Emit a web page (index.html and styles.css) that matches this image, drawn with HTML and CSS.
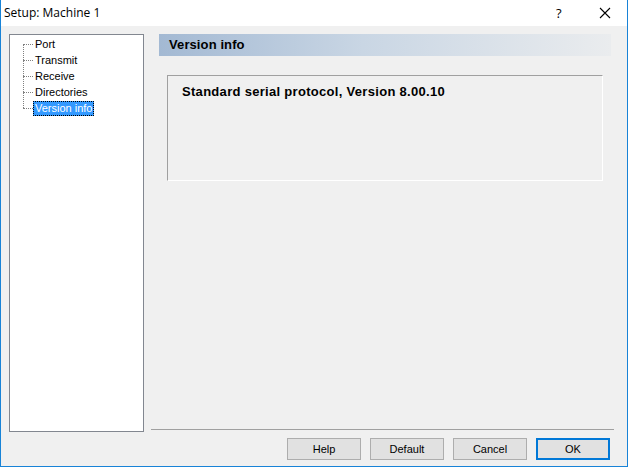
FILE: index.html
```html
<!DOCTYPE html>
<html>
<head>
<meta charset="utf-8">
<link rel="stylesheet" href="styles.css">
</head>
<body>
<div class="window">
  <div class="titlebar">
    <span class="title">Setup: Machine 1</span>
    <span class="help-q">?</span>
    <span class="close">
      <svg width="12" height="12" viewBox="0 0 12 12"><path d="M1 1 L11 11 M11 1 L1 11" stroke="#000" stroke-width="1.1" fill="none"/></svg>
    </span>
  </div>
  <div class="client">
    <div class="tree">
      <div class="tree-line"></div>
      <div class="item"><span class="dots"></span><span class="label">Port</span></div>
      <div class="item"><span class="dots"></span><span class="label">Transmit</span></div>
      <div class="item"><span class="dots"></span><span class="label">Receive</span></div>
      <div class="item"><span class="dots"></span><span class="label">Directories</span></div>
      <div class="item"><span class="dots"></span><span class="label selected">Version info</span></div>
    </div>
    <div class="right">
      <div class="content">
        <div class="header">Version info</div>
        <div class="group">Standard serial protocol, Version 8.00.10</div>
      </div>
      <div class="separator"></div>
      <div class="buttons">
        <button class="btn">Help</button>
        <button class="btn">Default</button>
        <button class="btn">Cancel</button>
        <button class="btn default">OK</button>
      </div>
    </div>
  </div>
</div>
</body>
</html>
```
FILE: styles.css
```css
* { box-sizing: border-box; }
html, body { margin: 0; padding: 0; }
body { width: 628px; height: 467px; overflow: hidden; background: #f0f0f0; }
.window {
  width: 628px; height: 467px;
  border-left: 1px solid #1883d7;
  border-right: 1px solid #1883d7;
  border-bottom: 1px solid #1883d7;
  background: #f0f0f0;
  display: flex; flex-direction: column;
  font-family: "Liberation Sans", Arial, sans-serif;
}
.titlebar {
  height: 26px; background: #fff;
  display: flex; align-items: center;
  position: relative;
  flex: none;
}
.title {
  font-family: "Open Sans", "Noto Sans", sans-serif;
  font-size: 12px; color: #000;
  margin-left: 3px; margin-top: -1px;
}
.help-q {
  position: absolute; left: 555px; top: 4px;
  font-family: "Open Sans", sans-serif; font-size: 13px;
}
.close { position: absolute; left: 598px; top: 7px; display: flex; }
.client {
  flex: 1; display: flex;
  padding: 8px 13px 6px 8px;
  gap: 7px;
}
.tree {
  width: 135px; height: 398px;
  border: 1px solid #828790;
  background: #fff;
  padding-top: 1px;
  position: relative;
  font-size: 11px;
}
.tree-line {
  position: absolute; left: 13px; top: 9px; height: 64px;
  border-left: 1px dotted #808080;
}
.item { height: 16px; display: flex; align-items: center; }
.dots {
  width: 10px; margin-left: 13px; margin-right: 0;
  border-top: 1px dotted #808080;
}
.label { padding: 1px 2px; line-height: 13px; color: #000; }
.label.selected {
  background: #3399ff; color: #fff;
  outline: 1px dotted #000;
  outline-offset: -1px;
  padding: 1px 2px;
}
.right { flex: 1; display: flex; flex-direction: column; }
.content { flex: 1; padding: 0 3px 0 8px; }
.header {
  height: 22px;
  background: linear-gradient(to right, #a3b9d3 0%, #c9d6e4 45%, #eaecee 100%);
  font-weight: bold; font-size: 13px;
  padding-left: 10px; line-height: 22px;
  letter-spacing: 0.1px;
}
.group {
  margin: 19px 8px 0 8px;
  height: 106px;
  border-top: 1px solid #a0a0a0;
  border-left: 1px solid #a0a0a0;
  border-right: 1px solid #fff;
  border-bottom: 1px solid #fff;
  font-weight: bold; font-size: 13px;
  letter-spacing: 0.3px;
  padding: 8px 0 0 14px;
}
.separator { height: 1px; background: #a0a0a0; margin-bottom: 8px; }
.buttons {
  display: flex; justify-content: flex-end; gap: 9px;
  padding-right: 4px; height: 22px;
}
.btn {
  width: 74px; height: 22px;
  background: #e1e1e1; border: 1px solid #adadad;
  font-family: "Liberation Sans", Arial, sans-serif; font-size: 11px; color: #000;
  padding: 0; margin: 0;
}
.btn.default { border: 2px solid #0078d7; }
```
